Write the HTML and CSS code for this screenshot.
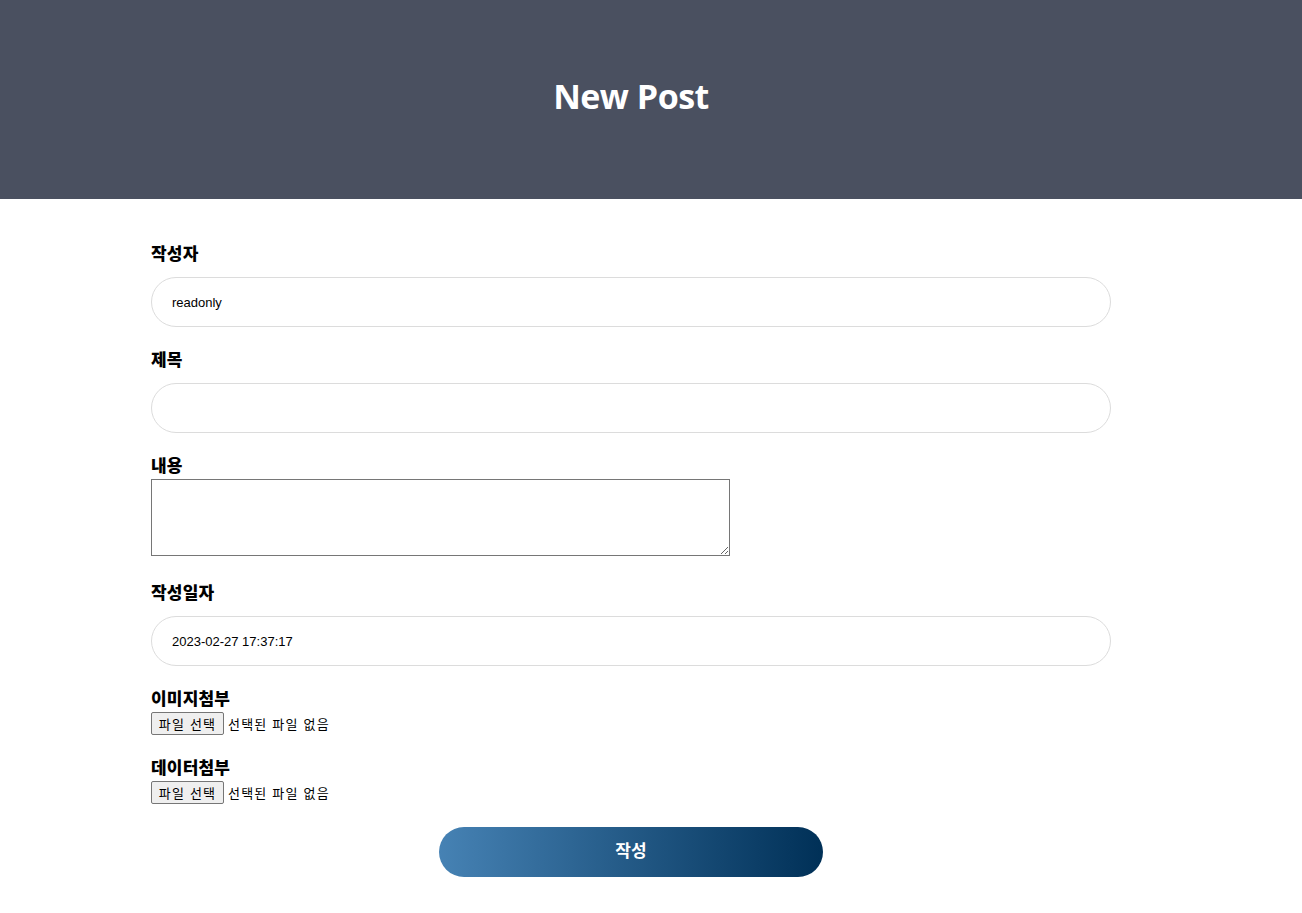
FILE: index.html
```html
<!DOCTYPE html>
<html lang="ko">
<head>
<meta charset="utf-8">
<title>New Post</title>
<link rel="stylesheet" href="styles.css">
</head>
<body>
<header class="hero">
  <h1 class="hero-title">New Post</h1>
</header>
<main class="form">
  <label class="label">작성자</label>
  <input class="field" type="text" value="readonly" readonly>
  <label class="label">제목</label>
  <input class="field" type="text">
  <label class="label">내용</label>
  <textarea class="area"></textarea>
  <label class="label">작성일자</label>
  <input class="field" type="text" value="2023-02-27 17:37:17">
  <label class="label">이미지첨부</label>
  <div class="file"><span class="file-btn">파일 선택</span><span class="file-text">선택된 파일 없음</span></div>
  <label class="label">데이터첨부</label>
  <div class="file file-last"><span class="file-btn">파일 선택</span><span class="file-text">선택된 파일 없음</span></div>
  <div class="actions"><button class="submit" type="button">작성</button></div>
</main>
</body>
</html>
```
FILE: styles.css
```css
* { box-sizing: border-box; }
body {
  margin: 0;
  background: #fff;
  font-family: "Noto Sans CJK KR", "Noto Sans", sans-serif;
}
.hero {
  height: 199px;
  background: #4a5060;
  display: flex;
  align-items: center;
  justify-content: center;
}
.hero-title {
  margin: 0 40px 8px 0;
  color: #fff;
  font-family: "Open Sans", sans-serif;
  font-weight: 700;
  font-size: 34px;
  letter-spacing: -0.5px;
}
.form {
  width: 960px;
  margin: 0 0 0 151px;
  padding-top: 42px;
  display: flex;
  flex-direction: column;
  align-items: flex-start;
}
.label {
  display: block;
  height: 24px;
  line-height: 24px;
  font-size: 17px;
  font-weight: 900;
  color: #000;
  letter-spacing: 0.2px;
}
.field {
  display: block;
  width: 960px;
  height: 50px;
  margin: 12px 0 20px 0;
  border: 1px solid #dcdcdc;
  border-radius: 25px;
  padding: 0 20px;
  font-family: "Liberation Sans", Arial, sans-serif;
  font-size: 13px;
  color: #000;
  outline: none;
}
.area {
  display: block;
  width: 579px;
  height: 77px;
  margin: 2px 0 24px 0;
  border: 1px solid #767676;
  resize: both;
}
.file {
  display: flex;
  align-items: center;
  height: 23px;
  margin-top: 2px;
  margin-bottom: 20px;
  font-family: "Noto Sans CJK KR", sans-serif;
  font-size: 13px;
  letter-spacing: 1.2px;
}
.file-btn {
  display: inline-flex;
  align-items: center;
  height: 23px;
  width: 73px;
  justify-content: center;
  border: 1px solid #767676;
  border-radius: 2px;
  background: #efefef;
  color: #000;
  margin-right: 4px;
}
.file-text { color: #000; }
.file-last { margin-bottom: 23px; }
.actions {
  width: 960px;
  display: flex;
  justify-content: center;
}
.submit {
  width: 384px;
  height: 50px;
  border: none;
  border-radius: 25px;
  padding: 0 0 5px 0;
  background: linear-gradient(to right, #4682b4, #003057);
  color: #fff;
  font-family: "Noto Sans CJK KR", sans-serif;
  font-size: 17px;
  font-weight: 700;
}
```
